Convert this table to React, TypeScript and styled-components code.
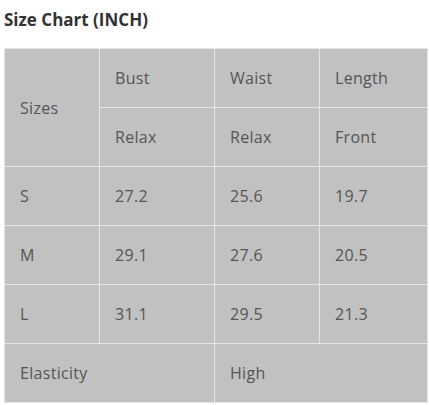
import React from "react";
import styled, { createGlobalStyle } from "styled-components";

const Global = createGlobalStyle`
  html, body { margin: 0; padding: 0; background: #ffffff; }
  body { font-family: "Open Sans", "DejaVu Sans", sans-serif; }
`;

const Page = styled.div`
  padding: 8px 2px 0 4px;
`;

const Title = styled.h3`
  margin: 0 0 16px 0;
  font-size: 17px;
  line-height: 24px;
  font-weight: 700;
  color: #333333;
`;

const Table = styled.table`
  width: 423px;
  border-collapse: collapse;
  table-layout: fixed;
  background: #c1c1c1;
  border: 1px solid #e6e6e6;
`;

const Cell = styled.td`
  height: 59px;
  padding: 0 0 0 15px;
  border: 1px solid #e6e6e6;
  font-size: 16px;
  font-weight: 400;
  letter-spacing: 0.3px;
  color: #555555;
  vertical-align: middle;
  text-align: left;
  box-sizing: border-box;
`;

const rows: [string, string, string, string][] = [
  ["S", "27.2", "25.6", "19.7"],
  ["M", "29.1", "27.6", "20.5"],
  ["L", "31.1", "29.5", "21.3"],
];

export default function App() {
  return (
    <>
      <Global />
      <Page>
        <Title>Size Chart (INCH)</Title>
        <Table>
          <colgroup>
            <col style={{ width: 95 }} />
            <col style={{ width: 115 }} />
            <col style={{ width: 105 }} />
            <col style={{ width: 108 }} />
          </colgroup>
          <tbody>
            <tr>
              <Cell rowSpan={2}>Sizes</Cell>
              <Cell>Bust</Cell>
              <Cell>Waist</Cell>
              <Cell>Length</Cell>
            </tr>
            <tr>
              <Cell>Relax</Cell>
              <Cell>Relax</Cell>
              <Cell>Front</Cell>
            </tr>
            {rows.map((r) => (
              <tr key={r[0]}>
                {r.map((v, i) => (
                  <Cell key={i}>{v}</Cell>
                ))}
              </tr>
            ))}
            <tr>
              <Cell colSpan={2}>Elasticity</Cell>
              <Cell colSpan={2}>High</Cell>
            </tr>
          </tbody>
        </Table>
      </Page>
    </>
  );
}
